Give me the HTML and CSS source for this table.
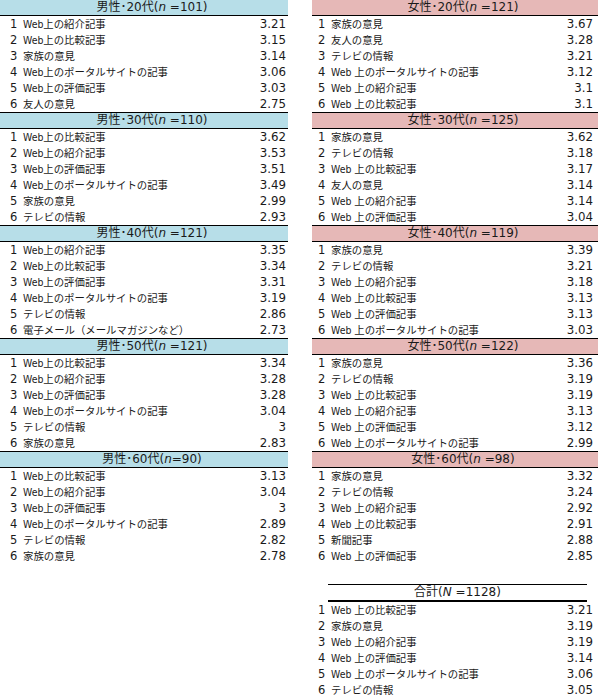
FILE: index.html
```html
<!DOCTYPE html>
<html lang="ja">
<head>
<meta charset="utf-8">
<link rel="stylesheet" href="styles.css">
</head>
<body>
<div class="page">
  <div class="col col-left">
    <section class="block">
      <div class="hdr male">男性･20代(<i>n</i> =101)</div>
      <div class="row"><span class="rk">1</span><span class="lb">Web上の紹介記事</span><span class="vl">3.21</span></div>
      <div class="row"><span class="rk">2</span><span class="lb">Web上の比較記事</span><span class="vl">3.15</span></div>
      <div class="row"><span class="rk">3</span><span class="lb">家族の意見</span><span class="vl">3.14</span></div>
      <div class="row"><span class="rk">4</span><span class="lb">Web上のポータルサイトの記事</span><span class="vl">3.06</span></div>
      <div class="row"><span class="rk">5</span><span class="lb">Web上の評価記事</span><span class="vl">3.03</span></div>
      <div class="row"><span class="rk">6</span><span class="lb">友人の意見</span><span class="vl">2.75</span></div>
    </section>
    <section class="block">
      <div class="hdr male">男性･30代(<i>n</i> =110)</div>
      <div class="row"><span class="rk">1</span><span class="lb">Web上の比較記事</span><span class="vl">3.62</span></div>
      <div class="row"><span class="rk">2</span><span class="lb">Web上の紹介記事</span><span class="vl">3.53</span></div>
      <div class="row"><span class="rk">3</span><span class="lb">Web上の評価記事</span><span class="vl">3.51</span></div>
      <div class="row"><span class="rk">4</span><span class="lb">Web上のポータルサイトの記事</span><span class="vl">3.49</span></div>
      <div class="row"><span class="rk">5</span><span class="lb">家族の意見</span><span class="vl">2.99</span></div>
      <div class="row"><span class="rk">6</span><span class="lb">テレビの情報</span><span class="vl">2.93</span></div>
    </section>
    <section class="block">
      <div class="hdr male">男性･40代(<i>n</i> =121)</div>
      <div class="row"><span class="rk">1</span><span class="lb">Web上の紹介記事</span><span class="vl">3.35</span></div>
      <div class="row"><span class="rk">2</span><span class="lb">Web上の比較記事</span><span class="vl">3.34</span></div>
      <div class="row"><span class="rk">3</span><span class="lb">Web上の評価記事</span><span class="vl">3.31</span></div>
      <div class="row"><span class="rk">4</span><span class="lb">Web上のポータルサイトの記事</span><span class="vl">3.19</span></div>
      <div class="row"><span class="rk">5</span><span class="lb">テレビの情報</span><span class="vl">2.86</span></div>
      <div class="row"><span class="rk">6</span><span class="lb">電子メール（メールマガジンなど）</span><span class="vl">2.73</span></div>
    </section>
    <section class="block">
      <div class="hdr male">男性･50代(<i>n</i> =121)</div>
      <div class="row"><span class="rk">1</span><span class="lb">Web上の比較記事</span><span class="vl">3.34</span></div>
      <div class="row"><span class="rk">2</span><span class="lb">Web上の紹介記事</span><span class="vl">3.28</span></div>
      <div class="row"><span class="rk">3</span><span class="lb">Web上の評価記事</span><span class="vl">3.28</span></div>
      <div class="row"><span class="rk">4</span><span class="lb">Web上のポータルサイトの記事</span><span class="vl">3.04</span></div>
      <div class="row"><span class="rk">5</span><span class="lb">テレビの情報</span><span class="vl">3</span></div>
      <div class="row"><span class="rk">6</span><span class="lb">家族の意見</span><span class="vl">2.83</span></div>
    </section>
    <section class="block">
      <div class="hdr male">男性･60代(<i>n</i>=90)</div>
      <div class="row"><span class="rk">1</span><span class="lb">Web上の比較記事</span><span class="vl">3.13</span></div>
      <div class="row"><span class="rk">2</span><span class="lb">Web上の紹介記事</span><span class="vl">3.04</span></div>
      <div class="row"><span class="rk">3</span><span class="lb">Web上の評価記事</span><span class="vl">3</span></div>
      <div class="row"><span class="rk">4</span><span class="lb">Web上のポータルサイトの記事</span><span class="vl">2.89</span></div>
      <div class="row"><span class="rk">5</span><span class="lb">テレビの情報</span><span class="vl">2.82</span></div>
      <div class="row"><span class="rk">6</span><span class="lb">家族の意見</span><span class="vl">2.78</span></div>
    </section>
  </div>
  <div class="col col-right">
    <section class="block">
      <div class="hdr female">女性･20代(<i>n</i> =121)</div>
      <div class="row"><span class="rk">1</span><span class="lb">家族の意見</span><span class="vl">3.67</span></div>
      <div class="row"><span class="rk">2</span><span class="lb">友人の意見</span><span class="vl">3.28</span></div>
      <div class="row"><span class="rk">3</span><span class="lb">テレビの情報</span><span class="vl">3.21</span></div>
      <div class="row"><span class="rk">4</span><span class="lb">Web 上のポータルサイトの記事</span><span class="vl">3.12</span></div>
      <div class="row"><span class="rk">5</span><span class="lb">Web 上の紹介記事</span><span class="vl">3.1</span></div>
      <div class="row"><span class="rk">6</span><span class="lb">Web 上の比較記事</span><span class="vl">3.1</span></div>
    </section>
    <section class="block">
      <div class="hdr female">女性･30代(<i>n</i> =125)</div>
      <div class="row"><span class="rk">1</span><span class="lb">家族の意見</span><span class="vl">3.62</span></div>
      <div class="row"><span class="rk">2</span><span class="lb">テレビの情報</span><span class="vl">3.18</span></div>
      <div class="row"><span class="rk">3</span><span class="lb">Web 上の比較記事</span><span class="vl">3.17</span></div>
      <div class="row"><span class="rk">4</span><span class="lb">友人の意見</span><span class="vl">3.14</span></div>
      <div class="row"><span class="rk">5</span><span class="lb">Web 上の紹介記事</span><span class="vl">3.14</span></div>
      <div class="row"><span class="rk">6</span><span class="lb">Web 上の評価記事</span><span class="vl">3.04</span></div>
    </section>
    <section class="block">
      <div class="hdr female">女性･40代(<i>n</i> =119)</div>
      <div class="row"><span class="rk">1</span><span class="lb">家族の意見</span><span class="vl">3.39</span></div>
      <div class="row"><span class="rk">2</span><span class="lb">テレビの情報</span><span class="vl">3.21</span></div>
      <div class="row"><span class="rk">3</span><span class="lb">Web 上の紹介記事</span><span class="vl">3.18</span></div>
      <div class="row"><span class="rk">4</span><span class="lb">Web 上の比較記事</span><span class="vl">3.13</span></div>
      <div class="row"><span class="rk">5</span><span class="lb">Web 上の評価記事</span><span class="vl">3.13</span></div>
      <div class="row"><span class="rk">6</span><span class="lb">Web 上のポータルサイトの記事</span><span class="vl">3.03</span></div>
    </section>
    <section class="block">
      <div class="hdr female">女性･50代(<i>n</i> =122)</div>
      <div class="row"><span class="rk">1</span><span class="lb">家族の意見</span><span class="vl">3.36</span></div>
      <div class="row"><span class="rk">2</span><span class="lb">テレビの情報</span><span class="vl">3.19</span></div>
      <div class="row"><span class="rk">3</span><span class="lb">Web 上の比較記事</span><span class="vl">3.19</span></div>
      <div class="row"><span class="rk">4</span><span class="lb">Web 上の紹介記事</span><span class="vl">3.13</span></div>
      <div class="row"><span class="rk">5</span><span class="lb">Web 上の評価記事</span><span class="vl">3.12</span></div>
      <div class="row"><span class="rk">6</span><span class="lb">Web 上のポータルサイトの記事</span><span class="vl">2.99</span></div>
    </section>
    <section class="block">
      <div class="hdr female">女性･60代(<i>n</i> =98)</div>
      <div class="row"><span class="rk">1</span><span class="lb">家族の意見</span><span class="vl">3.32</span></div>
      <div class="row"><span class="rk">2</span><span class="lb">テレビの情報</span><span class="vl">3.24</span></div>
      <div class="row"><span class="rk">3</span><span class="lb">Web 上の紹介記事</span><span class="vl">2.92</span></div>
      <div class="row"><span class="rk">4</span><span class="lb">Web 上の比較記事</span><span class="vl">2.91</span></div>
      <div class="row"><span class="rk">5</span><span class="lb">新聞記事</span><span class="vl">2.88</span></div>
      <div class="row"><span class="rk">6</span><span class="lb">Web 上の評価記事</span><span class="vl">2.85</span></div>
    </section>
    <section class="block total">
      <div class="hdr total-hdr">合計(<i>N</i> =1128)</div>
      <div class="row"><span class="rk">1</span><span class="lb">Web 上の比較記事</span><span class="vl">3.21</span></div>
      <div class="row"><span class="rk">2</span><span class="lb">家族の意見</span><span class="vl">3.19</span></div>
      <div class="row"><span class="rk">3</span><span class="lb">Web 上の紹介記事</span><span class="vl">3.19</span></div>
      <div class="row"><span class="rk">4</span><span class="lb">Web 上の評価記事</span><span class="vl">3.14</span></div>
      <div class="row"><span class="rk">5</span><span class="lb">Web 上のポータルサイトの記事</span><span class="vl">3.06</span></div>
      <div class="row"><span class="rk">6</span><span class="lb">テレビの情報</span><span class="vl">3.05</span></div>
    </section>
  </div>
</div>
</body>
</html>
```
FILE: styles.css
```css
* { box-sizing: border-box; }
html, body { margin: 0; padding: 0; background: #fff; }
body {
  font-family: "DejaVu Sans", "Noto Sans CJK JP", sans-serif;
  font-size: 12px;
  color: #1a1a1a;
}
.page {
  display: flex;
  gap: 24px;
  width: 598px;
}
.col { display: flex; flex-direction: column; }
.col-left { width: 288px; }
.col-right { width: 286px; }
.hdr {
  height: 17px;
  line-height: 15px;
  border-top: 1px solid #000;
  border-bottom: 1px solid #000;
  text-align: center;
  padding-left: 16px;
  white-space: nowrap;
  font-size: 12px;
}
.block:first-child .hdr { border-top: 0; height: 16px; }
.hdr i { font-family: "DejaVu Sans", sans-serif; font-style: italic; }
.male { background: #b7dee8; }
.female { background: #e6b8b7; }
.row {
  display: flex;
  height: 16px;
  line-height: 16px;
  white-space: nowrap;
}
.col-left .row { padding-left: 10px; padding-right: 2px; }
.col-right .row { padding-left: 6px; padding-right: 5px; }
.rk { width: 13px; flex: none; font-size: 11.5px; }
.lb {
  flex: 1;
  font-family: "DejaVu Sans Condensed", "Noto Sans CJK JP", sans-serif;
  font-size: 10.4px;
}
.vl { flex: none; text-align: right; font-size: 11.8px; }
.total { margin-top: 20px; }
.total-hdr {
  margin: 0 11px 0 16px;
  height: 18px;
  border-bottom-width: 2px;
  padding-left: 0;
  background: #fff;
}
```
